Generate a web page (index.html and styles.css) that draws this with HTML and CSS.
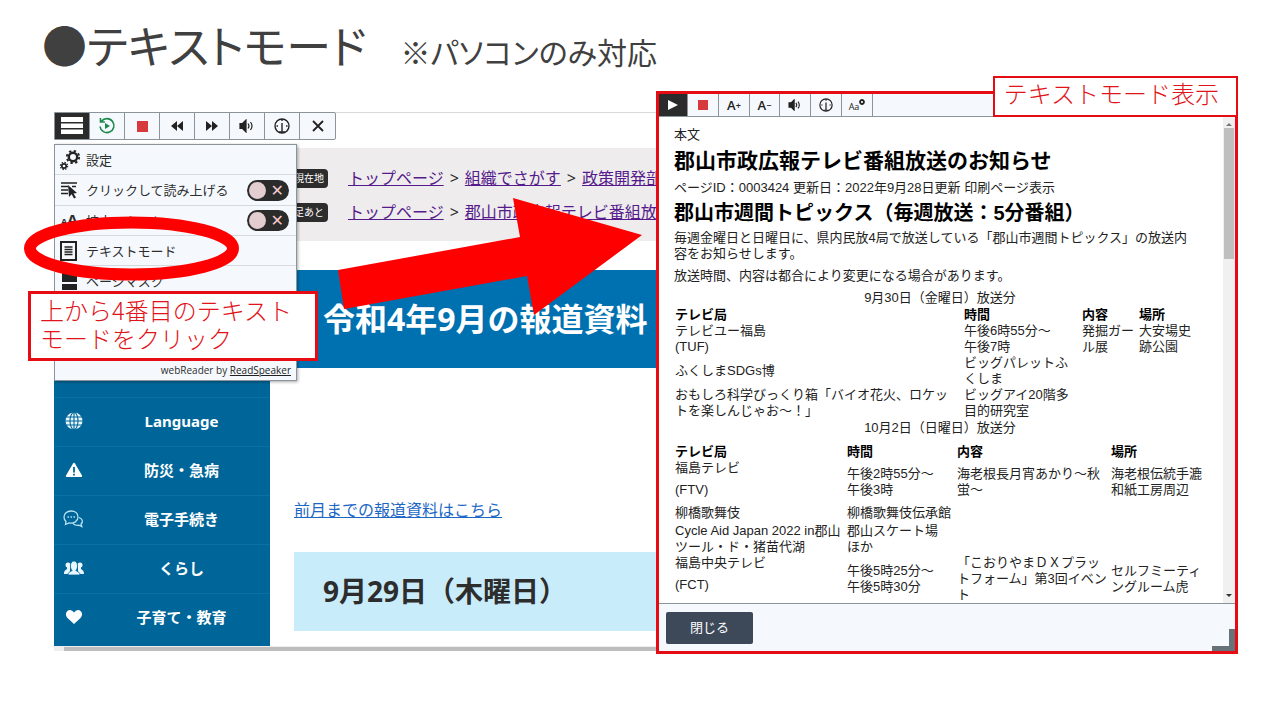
FILE: index.html
```html
<!DOCTYPE html>
<html lang="ja">
<head>
<meta charset="utf-8">
<title>テキストモード</title>
<link rel="stylesheet" href="styles.css">
</head>
<body>
<div class="slide">
  <header class="slide-head">
    <h1>●テキストモード</h1>
    <p>※パソコンのみ対応</p>
  </header>

  <main class="stage">
    <section class="browser">
      <div class="browser-top">
        <div class="toolbar">
          <button class="on" aria-label="メニュー"><svg width="22" height="18" viewBox="0 0 22 18" fill="#fff"><path d="M0 0h22v5H0zM0 6.500h22v4.500H0zM0 12.500h22V17H0z"/></svg></button>
          <button aria-label="もう一度"><svg width="18" height="18" viewBox="0 0 18 18" fill="none" stroke="#1c8a4c" stroke-width="1.6"><path d="M3.500 4.200A7 7 0 1 1 2 9.500M2.500 1v4h4.400"/><path d="M7 6l5 3-5 3z" fill="#1c8a4c" stroke="none"/></svg></button>
          <button aria-label="停止"><svg width="11" height="11"><path d="M0 0h11v11H0z" fill="#d63a3c"/></svg></button>
          <button aria-label="戻る"><svg width="12" height="10" viewBox="0 0 12 10" fill="#222"><path d="M6 0v10L0 5zM12 0v10L6 5z"/></svg></button>
          <button aria-label="進む"><svg width="12" height="10" viewBox="0 0 12 10" fill="#222"><path d="M0 0v10l6-5zM6 0v10l6-5z"/></svg></button>
          <button aria-label="音量"><svg width="16" height="14" viewBox="0 0 16 14" fill="none" stroke="#222" stroke-width="1.2"><path d="M1 4.500h2.500L7 1v12L3.500 9.500H1z" fill="#222"/><path d="M9 4.500q2 2.500 0 5M11.500 3q3 4 0 8"/></svg></button>
          <button aria-label="速度"><svg width="16" height="16" viewBox="0 0 16 16" fill="none" stroke="#222" stroke-width="1.400"><circle cx="8" cy="8" r="7"/><path d="M8 5v9M8 1v2M2.500 8h1.500M12 8h1.500M5 14h6"/></svg></button>
          <button aria-label="閉じる"><svg width="12" height="12" viewBox="0 0 12 12" stroke="#222" stroke-width="1.800"><path d="M1 1l10 10M11 1L1 11"/></svg></button>
        </div>
      </div>

      <nav class="crumbs" aria-label="パンくず">
        <div class="crumb-row"><span class="badge">現在地</span><span class="trail"><a href="#">トップページ</a><span>&gt;</span><a href="#">組織でさがす</a><span>&gt;</span><a href="#">政策開発部</a></span></div>
        <div class="crumb-row"><span class="badge">足あと</span><span class="trail"><a href="#">トップページ</a><span>&gt;</span><a href="#">郡山市政広報テレビ番組放</a></span></div>
      </nav>

      <div class="page">
        <nav class="side" aria-label="サイトメニュー">
          <a href="#"><svg width="18" height="18" viewBox="0 0 18 18" fill="none" stroke="#006699" stroke-width="1.1"><circle cx="9" cy="9" r="8.500" fill="#e9f7ff" stroke="none"/><ellipse cx="9" cy="9" rx="4" ry="8.500"/><path d="M9 0v18M0 9h18M1 5h16M1 13h16"/></svg><span>Language</span></a>
          <a href="#"><svg width="18" height="18" viewBox="0 0 18 18"><path d="M8 2.500q1-1.300 2 0l7 12q.5 1.500-1 1.500H2q-1.500 0-1-1.500z" fill="#fff"/><path d="M9 6v5.500M9 12.800v1.700" stroke="#006699" stroke-width="1.800"/></svg><span>防災・急病</span></a>
          <a href="#"><svg width="21" height="18" viewBox="0 0 21 18" fill="none" stroke="#b5e3f5" stroke-width="1.300"><path d="M3 11.500l-.5 3 3.500-1.500C11 14 15 11 15 7S12 1 8 1 1 3.500 1 7q0 3 2 4.500z"/><path d="M16 7.500c3.500 1 4.500 4.500 2 6.500l.8 2.500-3-1.300c-3 .5-5-.4-6-2"/><path d="M4.500 7H6M7.500 7H9M10.500 7H12" stroke-width="1.600"/></svg><span>電子手続き</span></a>
          <a href="#"><svg width="20" height="16" viewBox="0 0 20 16" fill="#e9f7ff"><circle cx="4" cy="5" r="2.500"/><circle cx="16" cy="5" r="2.500"/><path d="M0 14c0-4 2-4 3-5V6h3v8zM20 14c0-4-2-4-3-5V6h-3v8z"/><path d="M4 15c0-3.500 3-3 4-4.500C5.500 8 6 1 10 1s4.500 7 2 9.500c1 1.500 4 1 4 4.500z" stroke="#006699" stroke-width=".8"/></svg><span>くらし</span></a>
          <a href="#"><svg width="18" height="16" viewBox="0 0 18 16"><path d="M9 15L2.500 9C-1 5 2 1 5 1q2.500 0 4 2.500Q10.500 1 13 1c3 0 6 4 2.500 8z" fill="#fff"/></svg><span>子育て・教育</span></a>
        </nav>
        <article class="content">
          <h2 class="banner">令和4年9月の報道資料</h2>
          <p class="prev"><a href="#">前月までの報道資料はこちら</a></p>
          <h3 class="day">9月29日（木曜日）</h3>
        </article>
      </div>
      <div class="hscroll"><i></i></div>

      <div class="menu">
        <button class="row"><svg width="22" height="22" viewBox="0 0 22 22" fill="none" stroke="#222"><circle cx="14" cy="8" r="4.200" stroke-width="2.400"/><circle cx="14" cy="8" r="6.200" stroke-width="1.800" stroke-dasharray="2.400 2.470"/><circle cx="5" cy="17" r="2.200" stroke-width="1.700"/><circle cx="5" cy="17" r="3.600" stroke-width="1.200" stroke-dasharray="1.400 1.430"/></svg>設定</button>
        <label class="row"><svg width="22" height="22" viewBox="0 0 22 22" fill="none" stroke="#222" stroke-width="1.400"><path d="M2 4h16M2 7.500h7M2 11h7M2 14.500h7M13 7.500h4"/><path d="M9 6l9 8-3.500.5 2.500 4-2 1-2.300-4.200L10 18z" fill="#222" stroke="none"/></svg>クリックして読み上げる<input type="checkbox"></label>
        <label class="row"><span class="aa"><small>A</small>A</span>拡大テキスト<input type="checkbox"></label>
        <button class="row"><svg width="22" height="22" viewBox="0 0 22 22" fill="none" stroke="#222"><path d="M2 2h15v18H2z" stroke-width="2"/><path d="M5.500 7h8M5.500 9.500h8M5.500 12h8M5.500 14.500h8" stroke-width="1.300"/></svg>テキストモード</button>
        <button class="row"><svg width="22" height="22" viewBox="0 0 22 22" fill="#222"><path d="M3 2h15v10H3zM3 14h15v6H3z"/></svg>ページマスク</button>
        <div class="brand">webReader by <a href="#">ReadSpeaker</a></div>
      </div>
    </section>

    <section class="dialog" aria-label="テキストモード">
      <div class="toolbar small">
        <button class="on" aria-label="再生"><svg width="10" height="10" viewBox="0 0 10 10"><path d="M0 0l10 5-10 5z" fill="#fff"/></svg></button>
        <button aria-label="停止"><svg width="10" height="10"><path d="M0 0h10v10H0z" fill="#d63a3c"/></svg></button>
        <button aria-label="文字を大きく">A<sup>+</sup></button>
        <button aria-label="文字を小さく">A<sup>−</sup></button>
        <button aria-label="音量"><svg width="14" height="12" viewBox="0 0 16 14" fill="none" stroke="#222" stroke-width="1.300"><path d="M1 4.500h2.500L7 1v12L3.500 9.500H1z" fill="#222"/><path d="M9 4.500q2 2.500 0 5M11.500 3q3 4 0 8"/></svg></button>
        <button aria-label="速度"><svg width="14" height="14" viewBox="0 0 16 16" fill="none" stroke="#222" stroke-width="1.400"><circle cx="8" cy="8" r="7"/><path d="M8 5v9M8 1v2M2.500 8h1.500M12 8h1.500M5 14h6"/></svg></button>
        <button class="font-set" aria-label="表示設定">Aa<svg width="6" height="6" viewBox="0 0 6 6"><circle cx="3" cy="3" r="2" fill="none" stroke="#222" stroke-width="1.800"/></svg></button>
      </div>
      <div class="reader">
        <div class="text">
          <p>本文</p>
          <h2>郡山市政広報テレビ番組放送のお知らせ</h2>
          <p>ページID：0003424 更新日：2022年9月28日更新 印刷ページ表示</p>
          <h3>郡山市週間トピックス（毎週放送：5分番組）</h3>
          <p class="para">毎週金曜日と日曜日に、県内民放4局で放送している「郡山市週間トピックス」の放送内<br>容をお知らせします。</p>
          <p class="para">放送時間、内容は都合により変更になる場合があります。</p>
          <table class="first">
            <caption>9月30日（金曜日）放送分</caption>
            <colgroup><col class="a1"><col class="a2"><col class="a3"><col class="a4"></colgroup>
            <tr><th>テレビ局</th><th>時間</th><th>内容</th><th>場所</th></tr>
            <tr><td>テレビユー福島<br>(TUF)</td><td>午後6時55分～<br>午後7時</td><td>発掘ガー<br>ル展</td><td>大安場史<br>跡公園</td></tr>
            <tr><td>ふくしまSDGs博</td><td>ビッグパレットふ<br>くしま</td><td></td><td></td></tr>
            <tr><td>おもしろ科学びっくり箱「バイオ花火、ロケッ<br>トを楽しんじゃお～！」</td><td>ビッグアイ20階多<br>目的研究室</td><td></td><td></td></tr>
          </table>
          <table class="second">
            <caption>10月2日（日曜日）放送分</caption>
            <colgroup><col class="b1"><col class="b2"><col class="b3"><col class="b4"></colgroup>
            <tr><th>テレビ局</th><th>時間</th><th>内容</th><th>場所</th></tr>
            <tr class="station"><td><p>福島テレビ</p><p>(FTV)</p></td><td>午後2時55分～<br>午後3時</td><td>海老根長月宵あかり～秋<br>蛍～</td><td>海老根伝統手漉<br>和紙工房周辺</td></tr>
            <tr class="single"><td>柳橋歌舞伎</td><td>柳橋歌舞伎伝承館</td><td></td><td></td></tr>
            <tr><td>Cycle Aid Japan 2022 in郡山<br>ツール・ド・猪苗代湖</td><td>郡山スケート場<br>ほか</td><td></td><td></td></tr>
            <tr class="station"><td><p>福島中央テレビ</p><p>(FCT)</p></td><td>午後5時25分～<br>午後5時30分</td><td>「こおりやまＤＸプラッ<br>トフォーム」第3回イベン<br>ト</td><td>セルフミーティ<br>ングルーム虎</td></tr>
          </table>
        </div>
        <div class="vscroll"><svg width="6" height="4"><path d="M0 4l3-3 3 3z" fill="#777"/></svg><i></i><svg width="6" height="4"><path d="M0 0l3 3 3-3z" fill="#333"/></svg></div>
      </div>
      <div class="dialog-foot">
        <button>閉じる</button>
        <svg width="23" height="22" viewBox="0 0 23 22"><path d="M17 0h6v22H0v-5h17z" fill="#66717a"/></svg>
      </div>
      <div class="note note-b">テキストモード表示</div>
    </section>

    <svg class="marks" width="660" height="240" viewBox="0 91 660 240">
      <ellipse cx="131.500" cy="248.500" rx="101.500" ry="26" fill="none" stroke="#f00" stroke-width="12"/>
      <path d="M338 270L520 237 513 198 642 235 534 315 527 276 344 309z" fill="#f00"/>
    </svg>
    <div class="note note-a">上から4番目のテキスト<br>モードをクリック</div>
  </main>
</div>
</body>
</html>
```
FILE: styles.css
```css
* { box-sizing: border-box; }
body { margin: 0; background: #fff; color: #2d2d2d; font: 16px/24px "Noto Sans", "Noto Sans CJK JP", sans-serif; }
h1, h2, h3, p { margin: 0; }
button { margin: 0; padding: 0; border: 0; border-radius: 0; background: none; color: inherit; font: inherit; }
svg { display: block; flex: none; }

.slide { min-height: 100vh; }
.slide-head { display: flex; align-items: baseline; gap: 34px; height: 91px; padding: 12px 42px 0; color: #404040; font-family: "Noto Sans CJK JP", sans-serif; font-feature-settings: "palt"; }
.slide-head h1 { font-size: 45px; line-height: 66px; font-weight: 400; white-space: nowrap; }
.slide-head p { font-size: 30px; line-height: 44px; white-space: nowrap; }

.stage { position: relative; display: grid; grid-template-columns: 602fr 582fr; padding: 0 42px 0 54px; align-items: start; }

.toolbar { display: flex; width: max-content; height: 28px; background: #f5f9fd; border: 1px solid #8b949b; border-radius: 0 2px 2px 0; }
.toolbar button { display: flex; align-items: center; justify-content: center; width: 35px; border-right: 1px solid #8b949b; }
.toolbar button:last-child { border-right: 0; }
.toolbar .on { background: #2b2b2b; }

.browser { position: relative; margin-top: 21px; min-width: 0; overflow: hidden; }
.browser-top { height: 36px; border-top: 1px solid #d8dade; }
.browser-top .toolbar { margin-top: -1px; position: relative; }

.crumbs { padding: 13px 0 12px 234px; background: #eeecec; overflow: hidden; }
.crumb-row { display: flex; align-items: center; gap: 20px; height: 34px; }
.badge { flex: none; width: 40px; padding-left: 6px; border-radius: 4px; background: #2d2d2d; color: #fff; font-size: 10px; line-height: 19px; white-space: nowrap; }
.trail { display: flex; gap: 6px; white-space: nowrap; }
.trail a { color: #551a8b; }

.page { display: grid; grid-template-columns: 216px 1fr; }
.side { padding-top: 156px; background: #006699; color: #fff; font-weight: 700; font-size: 15px; }
.side a { display: grid; grid-template-columns: 39px 1fr; align-items: center; height: 49px; padding-bottom: 2px; border-top: 1px solid #0b71a3; color: inherit; text-decoration: none; }
.side a:last-child { height: 53px; padding-bottom: 6px; }
.side svg { justify-self: center; }
.side span { text-align: center; }
.content { display: flex; flex-direction: column; padding-top: 29px; min-width: 0; }
.banner { height: 98px; padding-left: 53px; background: #0071b0; color: #fff; font-size: 32px; line-height: 98px; white-space: nowrap; }
.prev { margin: 130px 0 30px 24px; }
.prev a { color: #1c67c4; }
.day { margin-left: 24px; padding-left: 29px; background: #c9ecfb; font-size: 28px; line-height: 79px; white-space: nowrap; }
.hscroll { height: 5px; padding: 1px 0 0 10px; background: #eee; }
.hscroll i { display: block; height: 4px; background: #bdbdbd; }

.menu { position: absolute; left: 0; top: 32px; width: 243px; height: 237px; display: flex; flex-direction: column; border: 1px solid #8b949b; background: #f5f9fd; box-shadow: 1px 1px 3px #0005; font-size: 13px; line-height: 20px; }
.row { display: flex; align-items: center; gap: 5px; flex: none; height: 30px; padding: 0 7px 0 4px; border-bottom: 1px solid #d5dade; text-align: left; }
.row:nth-child(2) { height: 31px; }
.row:nth-child(n+5) { border-bottom: 0; }
.row input { appearance: none; position: relative; width: 42px; height: 21px; margin: 0 0 0 auto; border-radius: 11px; background: #2b2b2b; }
.row input::before { content: ""; position: absolute; left: 2px; top: 2px; width: 17px; height: 17px; border-radius: 50%; background: #e3cdd1; }
.row input::after { content: "✕"; position: absolute; right: 5px; top: 0; color: #f5c8ca; font: 16px/21px "DejaVu Sans", sans-serif; }
.aa { width: 22px; padding-left: 2px; font: 700 15px/20px "Open Sans", sans-serif; white-space: nowrap; }
.aa small { font-size: 9px; }
.brand { margin-top: auto; padding-right: 5px; text-align: right; font: 10px/20px "Open Sans", sans-serif; }
.brand a { color: #222; }

.dialog { position: relative; border: 3px solid #e60c14; background: #f5f9fd; min-width: 0; color: #222; font: 13px/16px "Liberation Sans", "Noto Sans CJK JP", sans-serif; }
.toolbar.small { width: auto; height: 23px; border: 0; border-bottom: 1px solid #8b949b; }
.small button { width: 31px; font: 600 13px/20px "Open Sans", sans-serif; }
.small button:first-child { width: 29px; }
.small button:nth-child(4) { width: 30px; }
.small button:last-child { border-right: 1px solid #8b949b; }
.small sup { font-size: 9px; line-height: 9px; }
.small .font-set { font-size: 9px; font-weight: 400; padding-top: 3px; }
.font-set svg { margin-bottom: 10px; }

.reader { display: flex; height: 487px; border-bottom: 1px solid #8b949b; background: #fff; overflow: hidden; }
.text { flex: 1; min-width: 0; padding: 10px 17px 0 15px; white-space: nowrap; }
.text h2 { margin: 4px 0 5px; color: #000; font-size: 21px; line-height: 28px; }
.text h3 { margin: 4px 0; color: #000; font-size: 20px; line-height: 26px; }
.para { margin-bottom: 6px; }
.text table { width: 100%; table-layout: fixed; border-collapse: collapse; }
.text caption { padding-bottom: 1px; }
.text th { color: #000; text-align: left; }
.text th, .text td { padding: 0 0 0 1px; height: 16px; line-height: 16px; }
.second { margin-top: 1px; }
.text .second caption { padding-bottom: 8px; }
.a1 { width: 289px; } .a2 { width: 118px; } .a3 { width: 57px; }
.b1 { width: 172px; } .b2 { width: 110px; } .b3 { width: 154px; }
.station td { height: 43px; }
.station td:first-child { vertical-align: top; }
.station p + p { margin-top: 6px; }
.text .single td { height: 20px; }
.vscroll { display: flex; flex-direction: column; align-items: center; width: 12px; padding: 5px 0; background: #f0f0f0; }
.vscroll i { width: 10px; height: 131px; margin: 2px 0 auto; background: #bfbfbf; }
.dialog-foot { display: flex; align-items: center; justify-content: space-between; height: 47px; padding-left: 7px; }
.dialog-foot button { width: 87px; height: 32px; border-radius: 2px; background: #3d4959; color: #fff; font-size: 13px; }
.dialog-foot svg { align-self: flex-end; }

.note { position: absolute; border: 3px solid #e60c14; background: #fff; color: #e0141a; font: 300 24px/28px "Noto Sans CJK JP", sans-serif; white-space: nowrap; }
.note-a { left: 28px; top: 200px; padding: 2px 23px 6px 9px; }
.note-b { right: -3px; top: -18px; padding: 1px 17px 8px 9px; border-width: 2px; }
.marks { position: absolute; left: 0; top: 0; pointer-events: none; }
```
